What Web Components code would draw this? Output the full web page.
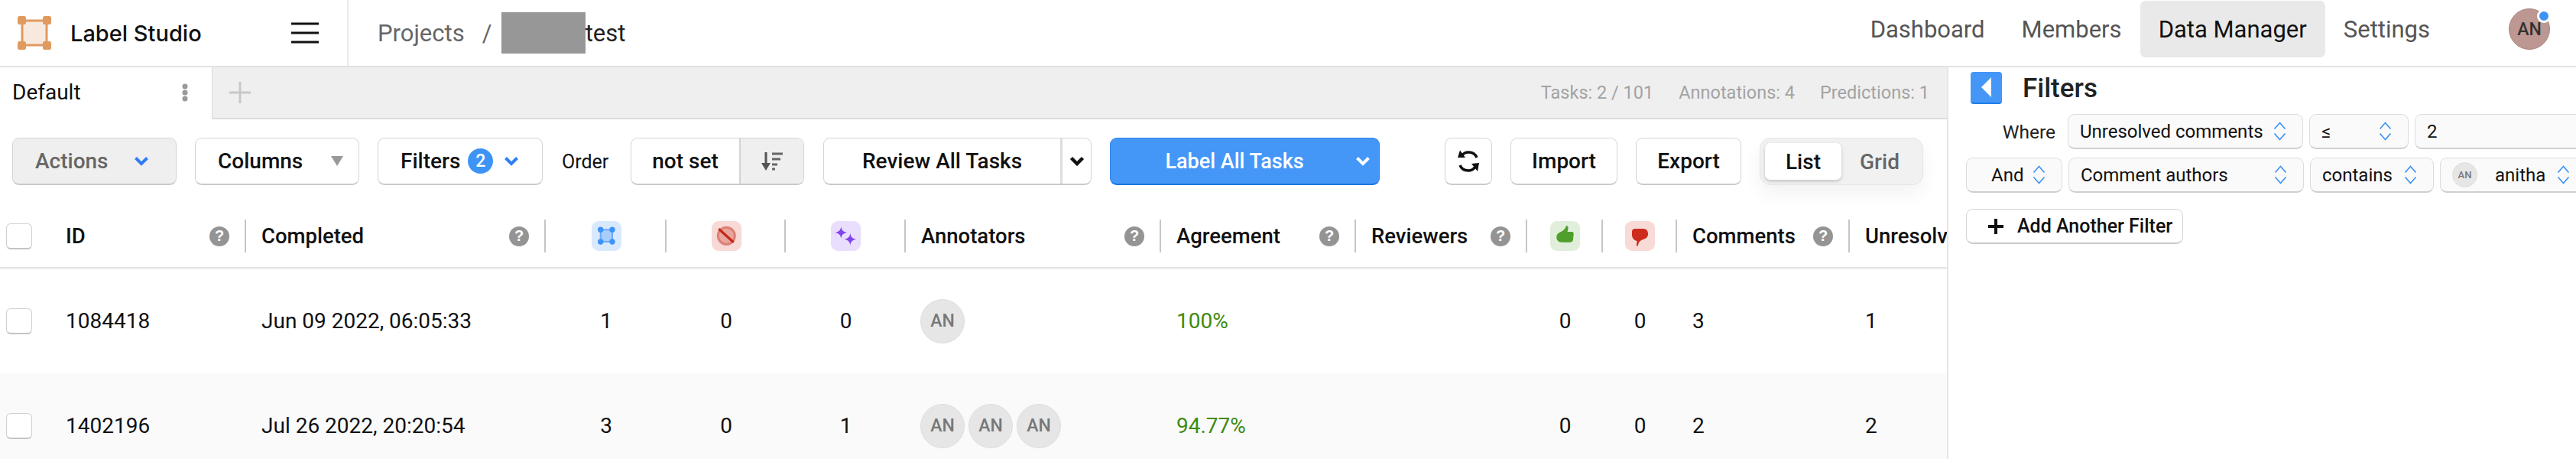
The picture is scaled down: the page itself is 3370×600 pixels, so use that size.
<!DOCTYPE html>
<html>
<head>
<meta charset="utf-8">
<title>Label Studio</title>
<style>
  html, body { margin: 0; padding: 0; background: #fff; }
  body { width: 3370px; height: 600px; overflow: hidden; font-family: Roboto, "Liberation Sans", sans-serif; color: #111; }
  .layout { display: flex; height: 513px; }
  ls-main { width: 2549px; }
</style>
</head>
<body>
<ls-topbar></ls-topbar>
<div class="layout">
  <ls-main>
    <ls-tabs></ls-tabs>
    <ls-toolbar></ls-toolbar>
    <ls-table></ls-table>
  </ls-main>
  <ls-filters></ls-filters>
</div>

<script>
const chevron = (color, w = 20, h = 13, sw = 4) => `<svg width="${w}" height="${h}" viewBox="0 0 20 13"><path d="M2.5 2.5 L10 10 L17.5 2.5" fill="none" stroke="${color}" stroke-width="${sw}"/></svg>`;
const updown = `<svg width="17" height="25" viewBox="0 0 17 25"><path d="M1.5 9.5 L8.5 1.5 L15.5 9.5 M1.5 15.5 L8.5 23.5 L15.5 15.5" fill="none" stroke="#3d94f5" stroke-width="1.7"/></svg>`;

class LsBase extends HTMLElement {
  connectedCallback() {
    if (this.shadowRoot) return;
    const root = this.attachShadow({ mode: "open" });
    root.innerHTML = this.markup();
  }
}

class LsAvatar extends LsBase {
  markup() {
    const size = this.getAttribute("size") || 58;
    const font = this.getAttribute("font") || 23;
    return `<style>
      :host { display: inline-flex; flex: none; }
      div { width: ${size}px; height: ${size}px; box-sizing: border-box; border-radius: 50%; background: #e6e6e6; border: 1px solid #dedede;
        color: #777; font: 500 ${font}px Roboto, sans-serif; display: flex; align-items: center; justify-content: center; }
    </style><div><slot></slot></div>`;
  }
}
customElements.define("ls-avatar", LsAvatar);

class LsHelp extends LsBase {
  markup() {
    return `<style>
      :host { display: inline-flex; }
      div { width: 26px; height: 26px; border-radius: 50%; background: #949494; color: #fff; font: 700 20px "Liberation Sans", sans-serif;
        display: flex; align-items: center; justify-content: center; }
    </style><div>?</div>`;
  }
}
customElements.define("ls-help", LsHelp);

class LsButton extends LsBase {
  markup() {
    const w = this.getAttribute("w");
    return `<style>
      :host { display: inline-flex; }
      .b { box-sizing: border-box; width: ${w}px; height: 62px; display: flex; align-items: center; justify-content: center; gap: 12px;
        background: #fff; border: 1px solid #d4d4d4; border-bottom: 2px solid #c9c9c9; border-radius: 9px;
        font: 500 28px Roboto, sans-serif; color: #111; }
    </style><div class="b" part="b"><slot></slot></div>`;
  }
}
customElements.define("ls-button", LsButton);

class LsTopbar extends LsBase {
  markup() {
    return `<style>
      :host { display: flex; height: 86px; box-sizing: content-box; border-bottom: 2px solid #e2e2e2; align-items: stretch; margin-bottom: -1px; position: relative; background: #fff; }
      .brand { width: 456px; box-sizing: border-box; border-right: 2px solid #e9e9e9; display: flex; align-items: center; padding-left: 23px; }
      .name { font: 500 29px Inter, sans-serif; margin-left: 25px; color: #111; width: 289px; white-space: nowrap; }
      .crumbs { display: flex; align-items: center; padding-left: 38px; font: 400 31px Roboto, sans-serif; color: #666; flex: 1; }
      .slash { margin: 0 2px 0 23px; width: 23px; }
      .mask { width: 110px; height: 54px; background: #979797; }
      .test { color: #222; }
      nav { display: flex; align-items: flex-start; padding-top: 1px; font: 400 31px Roboto, sans-serif; color: #555; }
      nav span { height: 74px; box-sizing: border-box; display: flex; align-items: center; padding: 0 24px; }
      nav .on { background: #e9e9e9; border-radius: 7px; color: #111; }
      .user { position: relative; width: 54px; height: 54px; box-sizing: border-box; border: 1px solid #ad8681; border-radius: 50%; background: #bd9791; color: #333; font: 500 23px Roboto, sans-serif;
        display: flex; align-items: center; justify-content: center; margin: 11px 34px 0 0; }
      .dot { position: absolute; right: -2px; top: 0px; width: 12px; height: 12px; border-radius: 50%; background: #3d94f5; border: 3px solid #fff; }
      .gapr { width: 79px; }
    </style>
    <div class="brand">
      <svg width="44" height="44" viewBox="0 0 44 44">
        <rect x="5" y="5" width="34" height="34" fill="#f8e9df"/>
        <rect x="6" y="6" width="32" height="32" fill="none" stroke="#e09a5f" stroke-width="3"/>
        <rect x="0" y="0" width="11" height="11" rx="2.5" fill="#e09a5f"/><rect x="33" y="0" width="11" height="11" rx="2.5" fill="#e09a5f"/>
        <rect x="0" y="33" width="11" height="11" rx="2.5" fill="#e09a5f"/><rect x="33" y="33" width="11" height="11" rx="2.5" fill="#e09a5f"/>
      </svg>
      <span class="name">Label Studio</span>
      <svg width="36" height="28" viewBox="0 0 36 28"><path d="M0 2 H36 M0 14 H36 M0 26 H36" stroke="#111" stroke-width="3"/></svg>
    </div>
    <div class="crumbs"><span>Projects</span><span class="slash">/</span><span class="mask"></span><span class="test">test</span></div>
    <nav><span>Dashboard</span><span>Members</span><span class="on">Data Manager</span><span>Settings</span></nav>
    <div class="gapr"></div>
    <div class="user">AN<i class="dot"></i></div>`;
  }
}
customElements.define("ls-topbar", LsTopbar);

class LsMain extends LsBase {
  markup() {
    return `<style>:host { display: block; border-right: 2px solid #e6e6e6; box-sizing: border-box; height: 513px; overflow: hidden; }</style><slot></slot>`;
  }
}
customElements.define("ls-main", LsMain);

class LsTabs extends LsBase {
  markup() {
    return `<style>
      :host { display: flex; height: 67px; background: #efefef; border-bottom: 2px solid #dadada; align-items: stretch; }
      .tab { width: 278px; box-sizing: border-box; background: #fff; border-bottom: 2px solid #fff; margin-bottom: -2px; border-right: 1px solid #d8d8d8; padding: 0 31px 0 16px; display: flex; align-items: center; justify-content: space-between; font: 400 28px Roboto, sans-serif; color: #111; }
      .plus { margin-left: 22px; align-self: center; display: flex; }
      .stats { margin-left: auto; display: flex; align-items: center; gap: 33px; padding-right: 23px; font: 400 23.5px Roboto, sans-serif; color: #a3a3a3; }
    </style>
    <div class="tab"><span>Default</span>
      <svg width="8" height="24" viewBox="0 0 8 24"><circle cx="4" cy="4" r="3.500" fill="#999"/><circle cx="4" cy="12" r="3.500" fill="#999"/><circle cx="4" cy="20" r="3.500" fill="#999"/></svg>
    </div>
    <div class="plus"><svg width="28" height="28" viewBox="0 0 28 28"><path d="M14 0 V28 M0 14 H28" stroke="#c8c8c8" stroke-width="3"/></svg></div>
    <div class="stats"><span>Tasks: 2 / 101</span><span>Annotations: 4</span><span>Predictions: 1</span></div>`;
  }
}
customElements.define("ls-tabs", LsTabs);

class LsToolbar extends LsBase {
  markup() {
    return `<style>
      :host { display: flex; align-items: center; padding: 24px 0 0 16px; height: 62px; }
      .space { display: flex; gap: 24px; align-items: center; }
      .c { width: 100%; display: flex; align-items: center; justify-content: space-between; padding: 0 20px 0 28px; box-sizing: border-box; }
      .actions::part(b) { background: #efefef; color: #666; }
      .order { font: 400 25px Roboto, sans-serif; margin: 0 33px 0 25px; width: 57px; flex: none; white-space: nowrap; }
      .group { width: 227px; height: 62px; box-sizing: border-box; display: flex; border: 1px solid #d4d4d4; border-bottom: 2px solid #c9c9c9; border-radius: 9px; overflow: hidden; font: 500 28px Roboto, sans-serif; margin-right: 1px; }
      .group span { width: 143px; box-sizing: border-box; display: flex; align-items: center; justify-content: center; border-right: 2px solid #d4d4d4; }
      .group i { flex: 1; background: #efefef; display: flex; align-items: center; justify-content: center; }
      .split { display: flex; width: 100%; height: 100%; align-items: center; }
      .split span { flex: 1; text-align: center; height: 100%; display: flex; align-items: center; justify-content: center; border-right: 3px solid #ddd; }
      .split em { width: 37px; display: flex; justify-content: center; }
      .label::part(b) { background: #4597f7; border-color: #2f86ee; border-bottom-color: #1976e2; color: #fff; }
      .badge { width: 33px; height: 33px; border-radius: 50%; background: #3d94f5; color: #fff; font: 500 23px Roboto, sans-serif; display: flex; align-items: center; justify-content: center; margin: 0 14px 0 10px; }
      .seg { width: 214px; height: 62px; box-sizing: border-box; border: 1px solid #e5e5e5; border-radius: 14px; background: #f1f1f1; padding: 6px; display: flex; font: 500 28px Roboto, sans-serif; color: #666; box-shadow: 0 12px 24px rgba(0,0,0,.05); }
      .seg b { font-weight: 500; width: 100px; background: #fff; border-radius: 7px; color: #111; display: flex; align-items: center; justify-content: center; box-shadow: 0 2px 4px rgba(0,0,0,.2); }
      .seg span { flex: 1; display: flex; align-items: center; justify-content: center; }
    </style>
    <div class="space">
      <ls-button class="actions" w="215"><div class="c" style="padding:0 35px 0 29px"><span>Actions</span>${chevron("#2f7cf6")}</div></ls-button>
      <ls-button w="215"><div class="c" style="padding:0 20px 0 29px"><span>Columns</span><svg width="16" height="13" viewBox="0 0 16 13"><path d="M0 0 H16 L8 13 Z" fill="#999"/></svg></div></ls-button>
      <ls-button w="216"><div class="c" style="justify-content:flex-start;padding:0 0 0 29px"><span>Filters</span><span class="badge">2</span>${chevron("#2f7cf6")}</div></ls-button>
    </div>
    <span class="order">Order</span>
    <div class="space">
      <div class="group"><span>not set</span><i>
        <svg width="28" height="24" viewBox="0 0 28 24"><path d="M6 0 V16" stroke="#555" stroke-width="3"/><path d="M0 14 H12 L6 24 Z" fill="#555"/><path d="M14 2 H28 M14 9 H25 M14 16 H21 M14 22 H18" stroke="#666" stroke-width="3"/></svg>
      </i></div>
      <ls-button w="351"><div class="split"><span>Review All Tasks</span><em>${chevron("#111", 20, 13, 4.5)}</em></div></ls-button>
      <ls-button class="label" w="353"><div class="c" style="padding:0 11px 0 0"><span style="flex:1;text-align:center;margin-left:4px;font-size:27px">Label All Tasks</span>${chevron("#fff")}</div></ls-button>
    </div>
    <div class="space" style="margin-left:85px">
      <ls-button w="62"><svg width="28" height="29" viewBox="0 0 28 29">
        <path d="M25 10 C23 5 19 3 14 3 C10 3 7 5 5 8" fill="none" stroke="#111" stroke-width="3.500"/><path d="M3 0.500 L0 10 L10 10 Z" fill="#111"/>
        <path d="M3 20 C5 25 9 27 14 27 C18 27 21 25 23 22" fill="none" stroke="#111" stroke-width="3.500"/><path d="M28 17 L18 18 L26 28 Z" fill="#111"/>
      </svg></ls-button>
      <ls-button w="140">Import</ls-button>
      <ls-button w="138">Export</ls-button>
      <div class="seg"><b>List</b><span>Grid</span></div>
    </div>`;
  }
}
customElements.define("ls-toolbar", LsToolbar);

class LsColIcon extends LsBase {
  markup() {
    const kind = this.getAttribute("kind");
    const art = {
      box: ["#d9e9fd", `<rect x="11.700" y="11.300" width="15.300" height="15.700" fill="#a9cdfb" stroke="#6aaaf8" stroke-width="2"/><circle cx="11.700" cy="11.300" r="3.700" fill="#3d94f5"/><circle cx="27" cy="11.300" r="3.700" fill="#3d94f5"/><circle cx="11.700" cy="27" r="3.700" fill="#3d94f5"/><circle cx="27" cy="27" r="3.700" fill="#3d94f5"/>`],
      skip: ["#f7d9d6", `<circle cx="19.300" cy="19.300" r="11" fill="#e9a69e" stroke="#dd7f75" stroke-width="3"/><path d="M9.300 10.300 L28.700 27.700" stroke="#c22a1a" stroke-width="3.200"/>`],
      pred: ["#e9dffd", `<path d="M13.300 7 C14 12 16 14 21 15 C16 16 14 18 13.300 23 C12.600 18 10.600 16 5.600 15 C10.600 14 12.600 12 13.300 7 Z M25.300 15.700 C26 20.700 28 22.700 33 23.700 C28 24.700 26 26.700 25.300 31.700 C24.600 26.700 22.600 24.700 17.600 23.700 C22.600 22.700 24.600 20.700 25.300 15.700 Z" fill="#8344f0"/>`],
      up: ["#e1eedb", `<path d="M21 6 C23 6 24 8 23.500 10 L22.500 14 L28 14 C30 14 30.700 15 30.700 17 L30 24 C29.500 27 28 27.700 25 27.700 L15 27.700 C11 27.700 8.300 25 8.300 21 C8.300 17 11 15.500 14 14 C17 12.500 20 10 21 6 Z" fill="#4f9f2c"/>`],
      down: ["#f8dad7", `<path d="M13 10 L24 10 C28 10 30 13 30 17 C30 21 27 23 23.500 24 C21 25 19 26.500 18 28 L16.500 32.700 L14.800 32 L15.500 26 C11.500 25 9 22 9 18 L9 14 C9 11.500 10.500 10 13 10 Z" fill="#cc2b1d"/>`],
    }[kind];
    return `<style>
      :host { display: inline-flex; }
      svg { display: block; width: 39px; height: 39px; border-radius: 9px; background: ${art[0]}; }
    </style><svg viewBox="0 0 39 39">${art[1]}</svg>`;
  }
}
customElements.define("ls-col-icon", LsColIcon);

class LsCheck extends LsBase {
  markup() {
    return `<style>
      :host { display: inline-flex; }
      div { width: 34px; height: 34px; box-sizing: border-box; background: #fff; border: 1px solid #d0d0d0; border-bottom: 2px solid #c4c4c4; border-radius: 6px; }
    </style><div></div>`;
  }
}
customElements.define("ls-check", LsCheck);

class LsTable extends LsBase {
  markup() {
    const cols = "66px 256px 392px 158px 156px 157px 334px 255px 224px 99px 97px 226px 129px";
    const num = (n) => `<div class="c mid">${n}</div>`;
    const left = (t) => `<div class="c">${t}</div>`;
    const ava = (n) => `<div class="c ava">${"<ls-avatar>AN</ls-avatar>".repeat(n)}</div>`;
    const row = (id, date, a, b, c, n, agree, d, e, f, g) => `<div class="row ${a === "3" ? "alt" : ""}">
      <div class="c chk"><ls-check></ls-check></div>${left(id)}${left(date)}${num(a)}${num(b)}${num(c)}${ava(n)}
      <div class="c good">${agree}</div><div class="c"></div>${num(d)}${num(e)}${left(f)}${left(g)}</div>`;
    const h = (t) => `<div class="h"><span>${t}</span><ls-help></ls-help></div>`;
    const ic = (k) => `<div class="h mid"><ls-col-icon kind="${k}"></ls-col-icon></div>`;
    return `<style>
      :host { display: block; margin-top: 20px; }
      .head, .row { display: grid; grid-template-columns: ${cols}; }
      .head { height: 89px; border-bottom: 2px solid #e4e4e4; box-shadow: 0 1px 2px rgba(0,0,0,.05); align-items: end; font: 500 27.5px Roboto, sans-serif; box-sizing: border-box; }
      .h { box-sizing: border-box; height: 43px; margin-bottom: 19px; display: flex; align-items: center; justify-content: space-between; padding: 0 20px 0 20px; border-right: 2px solid #c6c6c6; white-space: nowrap; }
      .h.mid { justify-content: center; padding: 0 0 0 2px; }
      .h.first { border-right: none; padding: 0 0 0 8px; }
      .h.last { border-right: none; }
      .row { height: 137px; font: 400 28px Roboto, sans-serif; color: #111; align-items: center; }
      .row.alt { background: #fafafa; }
      .c { padding-left: 20px; box-sizing: border-box; white-space: nowrap; }
      .c.mid { padding: 0; text-align: center; }
      .c.chk { padding-left: 8px; display: flex; }
      .c.ava { padding-left: 19px; display: flex; gap: 5px; }
      .c.good { color: #3f8a0e; }
    </style>
    <div class="head">
      <div class="h first"><ls-check></ls-check></div>
      ${h("ID")}${h("Completed")}${ic("box")}${ic("skip")}${ic("pred")}${h("Annotators")}${h("Agreement")}${h("Reviewers")}${ic("up")}${ic("down")}${h("Comments")}
      <div class="h last"><span>Unresolved</span></div>
    </div>
    ${row("1084418", "Jun 09 2022, 06:05:33", "1", "0", "0", 1, "100%", "0", "0", "3", "1")}
    ${row("1402196", "Jul 26 2022, 20:20:54", "3", "0", "1", 3, "94.77%", "0", "0", "2", "2")}`;
  }
}
customElements.define("ls-table", LsTable);

class LsSelect extends LsBase {
  markup() {
    const w = this.getAttribute("w");
    return `<style>
      :host { display: inline-flex; flex: none; }
      .s { box-sizing: border-box; width: ${w}px; height: 46px; background: #fafafa; border: 1px solid #dcdcdc; border-bottom: 2px solid #cfcfcf; border-radius: 9px;
        display: flex; align-items: center; justify-content: space-between; padding: 0 21px 0 15px; font: 400 24px Roboto, sans-serif; color: #111; white-space: nowrap; }
    </style><div class="s"><slot></slot>${this.hasAttribute("plain") ? "" : updown}</div>`;
  }
}
customElements.define("ls-select", LsSelect);

class LsFilters extends LsBase {
  markup() {
    return `<style>
      :host { display: block; flex: 1; min-width: 0; overflow: hidden; padding: 7px 0 0 23px; box-sizing: border-box; }
      .title { display: flex; align-items: center; gap: 27px; margin: 0 0 13px 6px; font: 500 35px Roboto, sans-serif; color: #222; height: 42px; }
      .back { width: 41px; height: 42px; box-sizing: border-box; background: #4597f7; border-bottom: 2px solid #1f7fe8; border-radius: 4px; display: flex; align-items: center; justify-content: center; }
      .line { display: flex; gap: 8px; align-items: center; margin-bottom: 11px; white-space: nowrap; width: 900px; }
      .where { width: 125px; text-align: right; font: 400 24.5px Roboto, sans-serif; padding-right: 8px; box-sizing: border-box; color: #222; }
      .add { display: flex; margin-top: 21px; }
      .add div { box-sizing: border-box; width: 284px; height: 46px; display: flex; align-items: center; gap: 18px; padding-left: 28px; background: #fff; border: 1px solid #d4d4d4; border-bottom: 2px solid #c9c9c9; border-radius: 9px; font: 500 25px Roboto, sans-serif; color: #111; }
      .anitha { margin-left: 23px; }
      .mini { display: flex; align-items: center; gap: 0; }
    </style>
    <div class="title"><div class="back"><svg width="14" height="26" viewBox="0 0 14 26"><path d="M13 0 V26 L0 13 Z" fill="#fff"/></svg></div><span>Filters</span></div>
    <div class="line"><span class="where">Where</span>
      <ls-select w="308">Unresolved comments</ls-select>
      <ls-select w="130">≤</ls-select>
      <ls-select w="300" plain>2</ls-select>
    </div>
    <div class="line">
      <ls-select w="126"><span style="margin-left:17px">And</span></ls-select>
      <ls-select w="308">Comment authors</ls-select>
      <ls-select w="162">contains</ls-select>
      <ls-select w="192"><span class="mini"><ls-avatar size="33" font="13">AN</ls-avatar><span class="anitha">anitha</span></span></ls-select>
    </div>
    <div class="add"><div><svg width="20" height="20" viewBox="0 0 20 20"><path d="M10 0 V20 M0 10 H20" stroke="#111" stroke-width="4"/></svg><span>Add Another Filter</span></div></div>`;
  }
}
customElements.define("ls-filters", LsFilters);
</script>
</body>
</html>
